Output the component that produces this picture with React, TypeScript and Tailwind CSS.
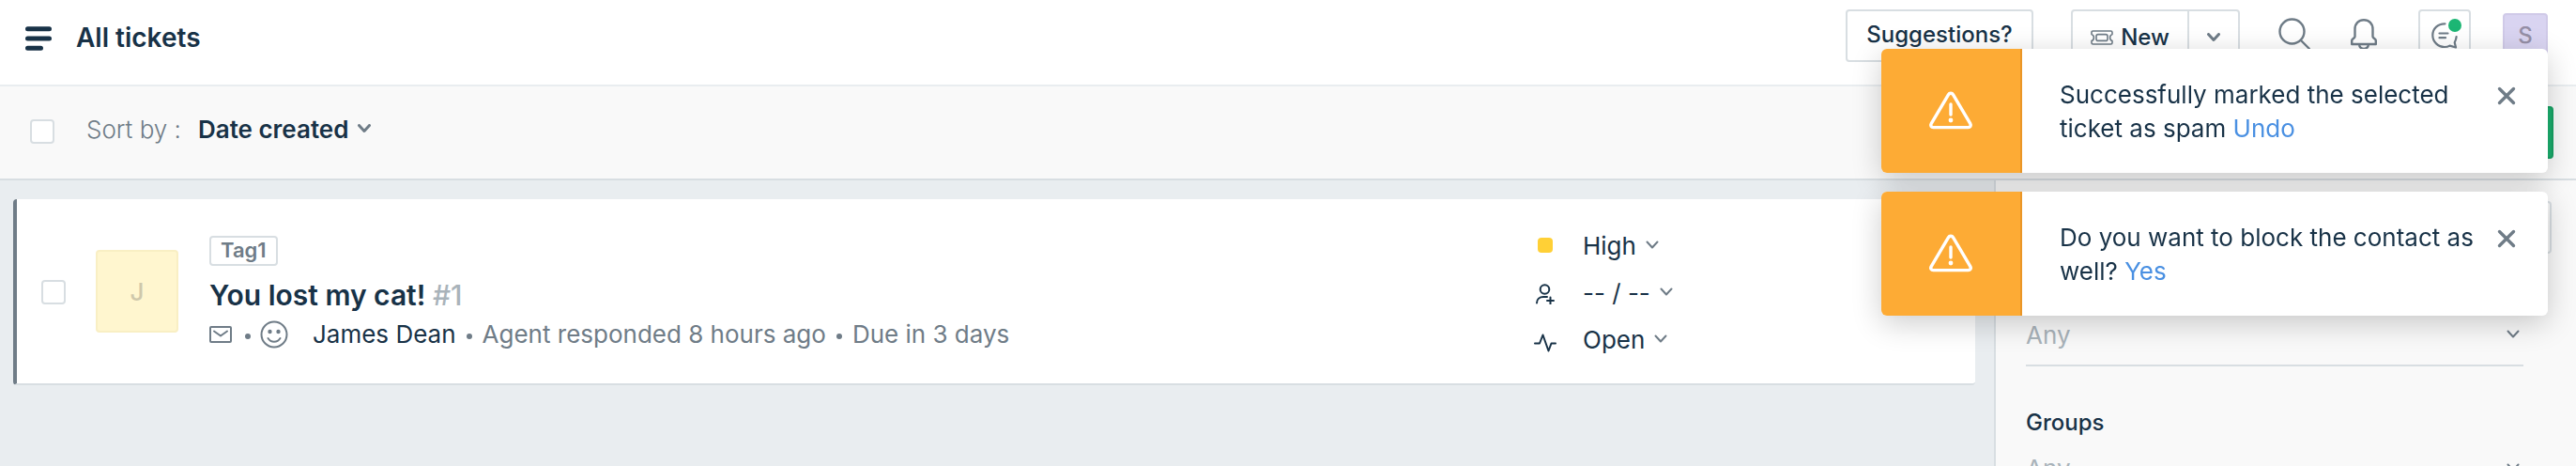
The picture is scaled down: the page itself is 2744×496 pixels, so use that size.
import { ReactNode } from "react";

interface ChevronProps {
  className?: string;
}

function Chevron({ className = "" }: ChevronProps) {
  return (
    <svg viewBox="0 0 14 10" className={`w-[14px] h-[10px] shrink-0 pointer-events-none ${className}`} fill="none" stroke="#6f7c87" strokeLinecap="round" strokeLinejoin="round">
      <path d="M1.5 1.5 7 7.5l5.5-6" />
    </svg>
  );
}

interface PropertySelectProps {
  icon: ReactNode;
  label: string;
  value: string;
}

function PropertySelect({ icon, label, value }: PropertySelectProps) {
  return (
    <label className="flex items-center h-[50px]">
      <span className="w-6 mr-7 flex justify-center">{icon}</span>
      <select aria-label={label} className="appearance-none field-sizing-content mr-[10px] outline-none">
        <option>{value}</option>
      </select>
      <Chevron className="stroke-2" />
    </label>
  );
}

interface FilterSelectProps {
  label: string;
}

function FilterSelect({ label }: FilterSelectProps) {
  return (
    <span className="flex items-center h-[66px] pr-1 border-b-2 border-[#d8dee2]">
      <select aria-label={label} className="appearance-none flex-1 outline-none text-[#a9b3ba]">
        <option>Any</option>
      </select>
      <Chevron className="stroke-2" />
    </span>
  );
}

interface ToastProps {
  message: string;
  action: string;
}

function Toast({ message, action }: ToastProps) {
  return (
    <div role="alert" className="flex h-[132px] rounded-md overflow-hidden bg-white shadow-[0_8px_32px_rgba(0,0,0,0.2)]">
      <div className="w-[150px] shrink-0 flex items-center justify-center bg-[#fdab35] border-r-2 border-[#ea9627]">
        <svg viewBox="0 0 48 42" className="w-12 h-[42px]" fill="none" stroke="#fff" strokeWidth="3.4" strokeLinecap="round" strokeLinejoin="round">
          <path d="M21.4 3.8 3.2 34.6c-1.2 2.1 0 4 2.2 4h37.2c2.2 0 3.4-1.9 2.2-4L26.6 3.8c-1.2-2.1-4-2.1-5.2 0Z" />
          <path d="M24 14v11" />
          <circle cx="24" cy="31" r="2.4" fill="#fff" stroke="none" />
        </svg>
      </div>
      <p className="flex-1 pl-10 pt-[31px] leading-9">
        {message}{" "}
        <a href="#" className="text-[#4a90e2]">{action}</a>
      </p>
      <button aria-label="Dismiss" className="self-start mt-10 mr-[34px] ml-3">
        <svg viewBox="0 0 20 20" className="w-5 h-5" fill="none" stroke="#6f7c87" strokeWidth="3.4" strokeLinecap="round">
          <path d="m2.5 2.5 15 15M17.5 2.5l-15 15" />
        </svg>
      </button>
    </div>
  );
}

function Header() {
  return (
    <header className="flex items-start h-[92px] bg-white border-b-2 border-[#e9edf0] pl-[27px] pr-[30px]">
      <button aria-label="Menu" className="mt-7">
        <svg viewBox="0 0 28 26" className="w-7 h-[26px]" stroke="#183247" strokeWidth="5" strokeLinecap="round">
          <path d="M2.5 2.8h23M2.5 13h23M2.5 23.2h14" />
        </svg>
      </button>
      <h1 className="ml-[26px] mt-5 text-[28px] leading-10 font-semibold">All tickets</h1>

      <div className="ml-auto flex items-start pt-[10px] text-2xl font-medium">
        <button className="h-14 w-[200px] mr-10 pb-[2px] border-2 border-[#d8dee2] rounded">Suggestions?</button>
        <div className="flex h-14 w-[180px] border-2 border-[#d8dee2] rounded">
          <button className="flex-1 flex items-center justify-center gap-2 pt-1 border-r-2 border-[#d8dee2]">
            <svg viewBox="0 0 24 16" className="w-6 h-4" fill="none" stroke="#6f7c87" strokeWidth="1.6" strokeLinejoin="round">
              <path d="M2.5 1h19c1 0 1.500.6 1.500 1.400v2c-1.600.6-2.400 2-2.400 3.600s.8 3 2.400 3.600v2c0 .8-.5 1.400-1.500 1.400h-19C1.500 15 1 14.400 1 13.600v-2C2.600 11 3.400 9.600 3.400 8S2.600 5 1 4.400v-2C1 1.600 1.500 1 2.500 1Z" />
              <rect x="6" y="4.600" width="12" height="6.800" rx="2" />
            </svg>
            New
          </button>
          <button aria-label="More options" className="w-[52px] flex items-center justify-center pt-1">
            <Chevron className="stroke-3" />
          </button>
        </div>
        <button aria-label="Search" className="ml-[41px] mt-[9px]">
          <svg viewBox="0 0 34 34" className="w-[34px] h-[34px]" fill="none" stroke="#6f7c87" strokeWidth="2.4" strokeLinecap="round">
            <circle cx="14.500" cy="14.500" r="13" />
            <path d="m24 24 9 9" />
          </svg>
        </button>
        <button aria-label="Notifications" className="ml-[43px] mt-[10px]">
          <svg viewBox="0 0 28 34" className="w-7 h-[34px]" fill="none" stroke="#6f7c87" strokeWidth="2.4" strokeLinejoin="round">
            <path d="M4.500 19v-8C4.500 5 8.500 1.200 14 1.200S23.500 5 23.500 11v8c0 1.600 3.300 2.400 3.300 4v4H1.200v-4c0-1.600 3.300-2.400 3.300-4Z" />
            <path d="M9 28c1 3 3 4 5 4s4-1 5-4" />
          </svg>
        </button>
        <button aria-label="Chat" className="relative ml-11 w-14 h-14 flex items-start justify-center pt-3 border-2 border-[#d8dee2] rounded">
          <svg viewBox="0 0 28 28" className="w-7 h-7" fill="none" stroke="#6f7c87" strokeWidth="2.200" strokeLinecap="round" strokeLinejoin="round">
            <path d="M14.500 1.300C7 1 1.300 6.500 1.300 13.500S7 26 14 26c2.300 0 4-.5 5.500-1.400L26 26.500l-1.300-5.300c1-1.900 1.700-3.800 1.900-6" />
            <path d="M8.500 11.500h9M8.500 16.200h6.500" />
          </svg>
          <span className="absolute right-2 top-2 w-[14px] h-[14px] rounded-full bg-[#1cb674]" />
        </button>
        <span className="ml-[34px] mt-1 w-12 h-12 flex items-center justify-center rounded bg-[#d9d4f1] border-2 border-[#d0cae8] text-[#958fa6]">S</span>
      </div>
    </header>
  );
}

function Toolbar() {
  return (
    <div className="flex items-center h-[100px] pl-8 pr-6 bg-[#f9f9f9] border-b-2 border-[#d8dee2]">
      <input type="checkbox" aria-label="Select all" className="appearance-none w-[26px] h-[26px] mb-[2px] rounded border-2 border-[#d8dee2] bg-white" />
      <label className="ml-[34px] mb-2 flex items-center">
        <span className="font-light text-[#6f7c87]">Sort by :</span>
        <select className="appearance-none field-sizing-content ml-[18px] mr-[10px] outline-none font-semibold">
          <option>Date created</option>
        </select>
        <Chevron className="stroke-3" />
      </label>
      <button aria-label="Export" className="ml-auto w-40 h-14 rounded bg-[#1cb06f] border-2 border-[#17a164]" />
    </div>
  );
}

function Dot() {
  return <span className="w-[6px] h-[6px] mt-1 rounded-full bg-[#6f7c87]" />;
}

function TicketCard() {
  return (
    <article className="flex items-center h-[198px] bg-white rounded border-b-2 border-b-[#d8dee2] border-l-4 border-l-[#6f7c87] pl-[26px]">
      <input type="checkbox" aria-label="Select ticket" className="appearance-none w-[26px] h-[26px] mt-[2px] rounded border-2 border-[#d8dee2]" />
      <span className="ml-8 w-[88px] h-[88px] flex items-center justify-center rounded bg-[#fff6cf] border-2 border-[#f9efc4] text-[#cfc8ab] font-medium">J</span>

      <div className="ml-[33px] mt-1 flex-1">
        <span className="flex items-center w-fit h-8 px-[10px] rounded border-2 border-[#d8dee2] text-[22px] font-semibold text-[#6f7c87]">Tag1</span>
        <h2 className="mt-[11px] text-[30px] leading-10 font-semibold">
          You lost my cat! <span className="font-medium text-[#a9b3ba]">#1</span>
        </h2>
        <div className="flex items-center h-9 mt-1 text-[#6f7c87]">
          <svg viewBox="0 0 24 18" className="w-6 h-[18px]" fill="none" stroke="currentColor" strokeWidth="2" strokeLinejoin="round" strokeLinecap="round">
            <rect x="1" y="1" width="22" height="16" rx="1" />
            <path d="m5 5.500 7 5 7-5" />
          </svg>
          <span className="w-[14px]" />
          <Dot />
          <svg viewBox="0 0 30 30" className="ml-[10px] mr-[26px] w-[30px] h-[30px]" fill="none" stroke="currentColor" strokeWidth="2" strokeLinecap="round">
            <circle cx="15" cy="15" r="13.500" />
            <circle cx="10.500" cy="12" r="2.200" fill="currentColor" stroke="none" />
            <circle cx="19.500" cy="12" r="2.200" fill="currentColor" stroke="none" />
            <path d="M8.500 19c1.600 2.600 4 3.800 6.500 3.800s4.900-1.200 6.500-3.800" />
          </svg>
          <div className="flex items-center gap-[11px]">
            <a href="#" className="text-[#183247]">James Dean</a>
            <Dot />
            <span>Agent responded 8 hours ago</span>
            <Dot />
            <span>Due in 3 days</span>
          </div>
        </div>
      </div>

      <div className="w-[470px] mt-[2px]">
        <PropertySelect label="Priority" value="High" icon={<span className="w-4 h-4 rounded bg-[#ffd036]" />} />
        <PropertySelect
          label="Assignee"
          value="-- / --"
          icon={
            <svg viewBox="0 0 20 22" className="w-5 h-[22px] mt-1" fill="none" stroke="#183247" strokeWidth="2" strokeLinecap="round">
              <circle cx="9.500" cy="6" r="4.800" />
              <path d="M1 20.500c0-4 3-6.500 7-6.500h4M15.500 14.500v7M12 18h7" />
            </svg>
          }
        />
        <PropertySelect
          label="Status"
          value="Open"
          icon={
            <svg viewBox="0 0 24 20" className="w-6 h-5 mt-2" fill="none" stroke="#183247" strokeWidth="2" strokeLinecap="round" strokeLinejoin="round">
              <path d="M1 10.500h5L9.500 1.500l6 17 3-8H23" />
            </svg>
          }
        />
      </div>
    </article>
  );
}

function FilterPanel() {
  return (
    <aside className="w-[620px] shrink-0 bg-[#f9f9f9] border-l-2 border-[#d8dee2] pl-8 pr-14 pt-[22px]">
      <div className="h-[110px] mr-[-30px] flex justify-end">
        <button aria-label="Search fields" className="w-14 h-14 rounded border-2 border-[#d8dee2]" />
      </div>
      <FilterSelect label="Agents" />
      <p className="mt-11 text-2xl leading-8 font-medium">Groups</p>
      <FilterSelect label="Groups" />
    </aside>
  );
}

export default function App() {
  return (
    <div className="h-screen flex flex-col overflow-hidden bg-[#e9edf0] text-[26px] text-[#183247] font-['Inter',sans-serif]">
      <Header />
      <Toolbar />
      <div className="flex flex-1 min-h-0">
        <main className="flex-1 pt-5 pl-[14px] pr-5">
          <TicketCard />
        </main>
        <FilterPanel />
      </div>

      {/* Toast stack */}
      <div className="fixed right-[30px] top-[52px] w-[710px] flex flex-col gap-5">
        <Toast message="Successfully marked the selected ticket as spam" action="Undo" />
        <Toast message="Do you want to block the contact as well?" action="Yes" />
      </div>
    </div>
  );
}
